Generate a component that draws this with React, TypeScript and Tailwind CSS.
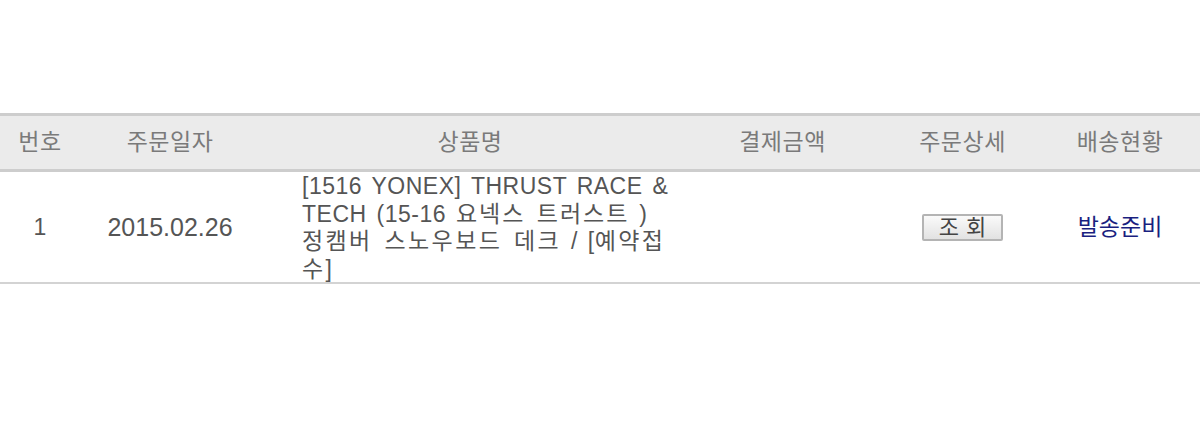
import React from "react";

const font = { fontFamily: '"Liberation Sans", "Noto Sans CJK KR", sans-serif' };

export default function App() {
  return (
    <div className="w-[1200px] h-[432px] bg-white overflow-hidden" style={font}>
      <div className="pt-[113px]">
        <div className="grid grid-cols-[80px_180px_420px_205px_155px_160px] border-t-[3px] border-b-[3px] border-[#cdcdcd] bg-[#ebebeb] h-[59px] items-center text-[23px] tracking-[0.5px] text-[#7a7a7a]">
          <div className="text-center">번호</div>
          <div className="text-center">주문일자</div>
          <div className="text-center">상품명</div>
          <div className="text-center">결제금액</div>
          <div className="text-center">주문상세</div>
          <div className="text-center">배송현황</div>
        </div>
        <div className="grid grid-cols-[80px_180px_420px_205px_155px_160px] border-b-[2px] border-[#d3d3d3] h-[112px] items-center text-[23px] text-[#555555]">
          <div className="text-center">1</div>
          <div className="text-center text-[25px]">2015.02.26</div>
          <div className="pl-[42px] pt-[1px] self-start">
            <div className="w-[372px] leading-[27.6px] tracking-[0.5px] [word-spacing:3px]">
              [1516 YONEX] THRUST RACE &amp; TECH (15-16{" "}
              <span className="tracking-[2px]">요넥스 트러스트</span> ){" "}
              <span className="tracking-[2.4px]">정캠버 스노우보드 데크</span> / [
              <span className="tracking-[2.4px]">예약접수</span>]
            </div>
          </div>
          <div></div>
          <div className="flex justify-center">
            <button className="w-[81px] h-[27px] border-2 border-[#b4b4b4] rounded-[2px] bg-gradient-to-b from-[#fafafa] to-[#e2e2e2] text-[22px] leading-none tracking-[7px] pl-[7px] text-[#444444] flex items-center justify-center">
              조회
            </button>
          </div>
          <div className="text-center text-[#1a1f80]">발송준비</div>
        </div>
      </div>
    </div>
  );
}
